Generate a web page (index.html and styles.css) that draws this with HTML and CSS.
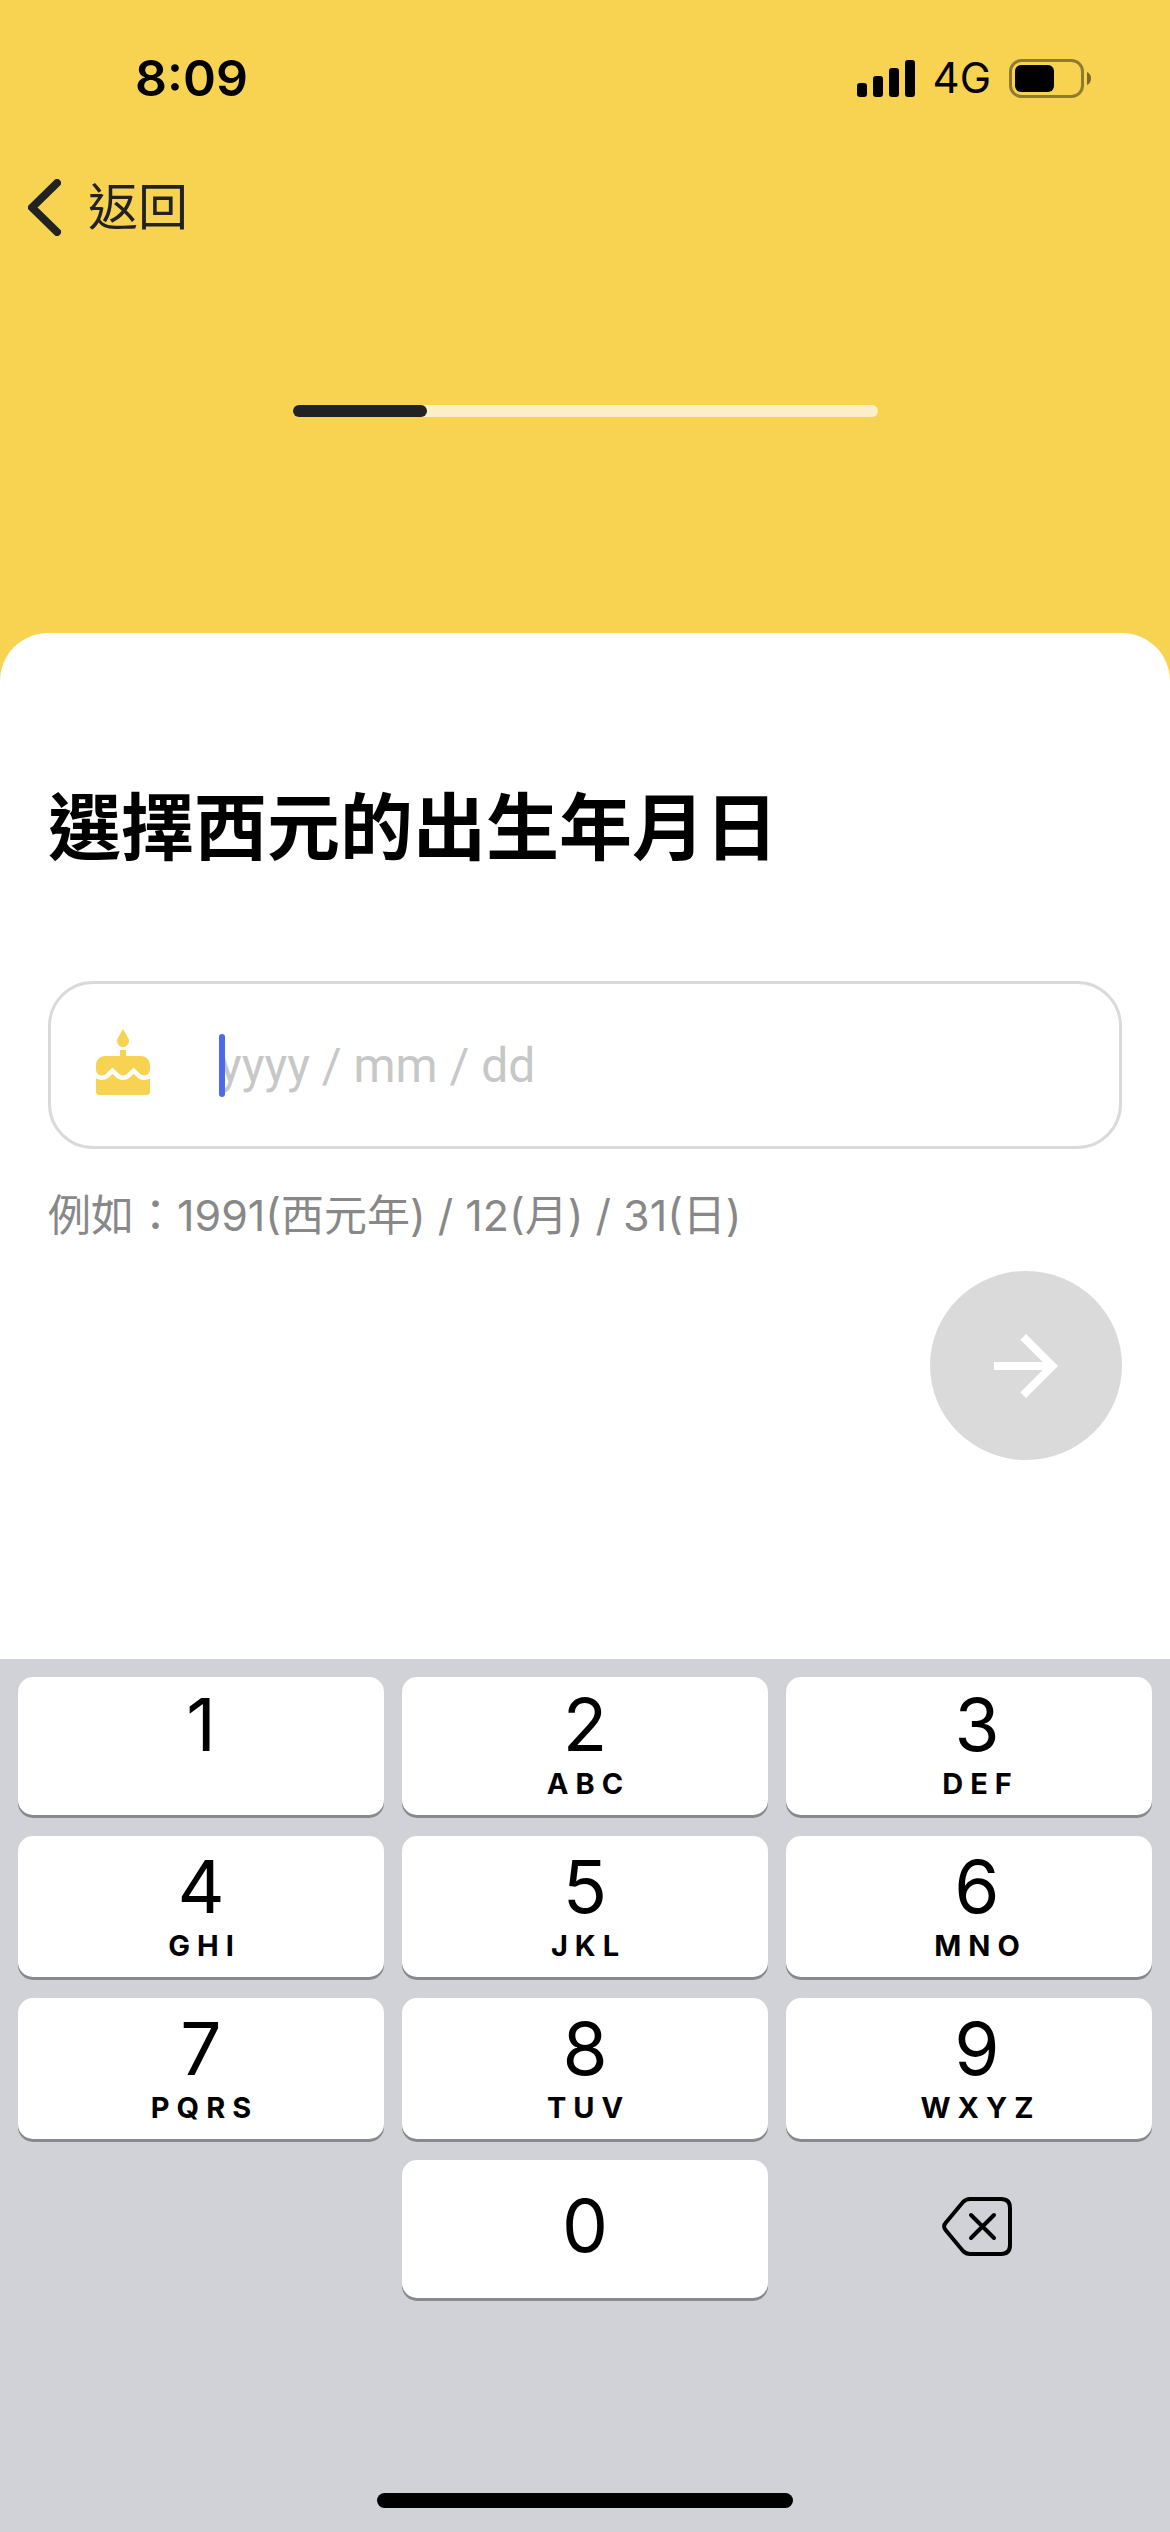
FILE: index.html
```html
<!DOCTYPE html>
<html lang="zh-Hant">
<head>
<meta charset="utf-8">
<meta name="viewport" content="width=device-width, initial-scale=1">
<title>選擇西元的出生年月日</title>
<link rel="stylesheet" href="styles.css">
</head>
<body>
<header class="top">
  <div class="status">
    <span class="status-time">8:09</span>
    <div class="status-icons">
      <svg class="signal" viewBox="0 0 58 37" aria-hidden="true">
        <rect x="0" y="23" width="10" height="14" rx="3"/>
        <rect x="16" y="16" width="10" height="21" rx="3"/>
        <rect x="32" y="8" width="10" height="29" rx="3"/>
        <rect x="48" y="0" width="10" height="37" rx="3"/>
      </svg>
      <span class="status-network">4G</span>
      <svg class="battery" viewBox="0 0 82 39" aria-hidden="true">
        <rect x="1.5" y="1.5" width="72" height="36" rx="11" fill="none" stroke="#000" stroke-width="3" opacity=".42"/>
        <path d="M78 13c2.600 1 4 3.500 4 6.500s-1.400 5.500-4 6.500z" opacity=".5"/>
        <rect x="6" y="6" width="39" height="27" rx="6"/>
      </svg>
    </div>
  </div>
  <nav class="nav">
    <a class="back" href="#">
      <svg class="back-icon" viewBox="0 0 33 57" aria-hidden="true"><path d="M29 4 4 28.500 29 53"/></svg>
      <span>返回</span>
    </a>
  </nav>
  <div class="progress" role="progressbar" aria-valuemin="0" aria-valuemax="100" aria-valuenow="23" aria-label="進度">
    <div class="progress-fill" style="width: 23%"></div>
  </div>
</header>

<main class="sheet">
  <h1 class="title"><label for="birthday">選擇西元的出生年月日</label></h1>
  <div class="field">
    <svg class="cake" viewBox="0 0 24 24" aria-hidden="true"><path d="M12 6c1.110 0 2-.9 2-2 0-.38-.1-.73-.29-1.030L12 0l-1.710 2.970c-.19.3-.29.65-.29 1.030 0 1.100.9 2 2 2zm4.600 9.990l-1.070-1.070-1.080 1.070c-1.300 1.300-3.580 1.310-4.890 0l-1.070-1.070-1.090 1.070C6.750 16.640 5.880 17 4.960 17c-.73 0-1.400-.23-1.960-.61V21c0 .55.45 1 1 1h16c.55 0 1-.45 1-1v-4.610c-.56.38-1.230.61-1.960.61-.92 0-1.790-.36-2.440-1.010zM18 9h-5V7h-2v2H6c-1.660 0-3 1.340-3 3v1.540c0 1.080.88 1.960 1.960 1.960.52 0 1.020-.2 1.380-.57l2.140-2.130 2.130 2.130c.74.74 2.030.74 2.770 0l2.140-2.130 2.130 2.130c.37.37.86.57 1.380.57 1.080 0 1.960-.88 1.960-1.960V12C21 10.340 19.660 9 18 9z"/></svg>
    <div class="entry">
      <input class="date" id="birthday" type="text" inputmode="numeric" placeholder="yyyy / mm / dd" aria-describedby="hint">
      <span class="caret" aria-hidden="true"></span>
    </div>
  </div>
  <p class="hint" id="hint">例如：1991(西元年) / 12(月) / 31(日)</p>
  <button class="next" type="button" aria-label="下一步">
    <svg class="next-icon" viewBox="0 0 16 16" aria-hidden="true"><path d="M8 0 6.590 1.410 12.170 7H0v2h12.170l-5.580 5.590L8 16l8-8z"/></svg>
  </button>
</main>

<section class="keyboard" aria-label="數字鍵盤">
  <div class="keys">
    <button class="key" type="button"><span class="digit">1</span><span class="letters"></span></button>
    <button class="key" type="button"><span class="digit">2</span><span class="letters">ABC</span></button>
    <button class="key key-right" type="button"><span class="digit">3</span><span class="letters">DEF</span></button>
    <button class="key" type="button"><span class="digit">4</span><span class="letters">GHI</span></button>
    <button class="key" type="button"><span class="digit">5</span><span class="letters">JKL</span></button>
    <button class="key key-right" type="button"><span class="digit">6</span><span class="letters">MNO</span></button>
    <button class="key" type="button"><span class="digit">7</span><span class="letters">PQRS</span></button>
    <button class="key" type="button"><span class="digit">8</span><span class="letters">TUV</span></button>
    <button class="key key-right" type="button"><span class="digit">9</span><span class="letters">WXYZ</span></button>
    <button class="key key-zero" type="button"><span class="digit">0</span></button>
    <button class="key key-right key-delete" type="button" aria-label="刪除">
      <svg class="delete-icon" viewBox="0 0 70 59" aria-hidden="true"><path d="M28 2h31c6 0 9 3 9 9v37c0 6-3 9-9 9H28c-3 0-5-1-7-3L4 33.500c-2.500-2.500-2.500-5.500 0-8L21 5c2-2 4-3 7-3z"/><path d="M29 18l23 23M52 18 29 41"/></svg>
    </button>
  </div>
  <div class="home-bar"></div>
</section>
</body>
</html>
```

FILE: styles.css
```css
*,
*::before,
*::after {
  box-sizing: border-box;
}

body {
  margin: 0;
  min-height: 100vh;
  display: flex;
  flex-direction: column;
  background: #f8d351;
  color: #000;
  font-family: Inter, "Noto Sans CJK TC", sans-serif;
}

button,
input {
  border: 0;
  padding: 0;
  font: inherit;
  color: inherit;
}

/* Status bar, back link and progress */
.top {
  padding-bottom: 216px;
}

.status {
  display: flex;
  align-items: center;
  justify-content: space-between;
  height: 156px;
  padding: 0 79px 0 135px;
}

.status-time {
  font-size: 50px;
  font-weight: 600;
  line-height: 60px;
}

.status-icons {
  display: flex;
  align-items: center;
  gap: 18px;
}

.status-network {
  font-size: 42px;
  line-height: 48px;
}

.signal {
  width: 58px;
  height: 37px;
}

.battery {
  width: 82px;
  height: 39px;
}

.nav {
  display: flex;
  height: 102px;
  padding-left: 28px;
}

.back {
  display: flex;
  align-items: center;
  gap: 27px;
  color: #222;
  font-size: 50px;
  line-height: 60px;
  text-decoration: none;
}

.back-icon {
  width: 33px;
  height: 57px;
  fill: none;
  stroke: #222;
  stroke-width: 8;
  stroke-linecap: round;
  stroke-linejoin: round;
}

.progress {
  width: 50%;
  height: 12px;
  margin: 147px auto 0;
  border-radius: 6px;
  background: #faefc6;
}

.progress-fill {
  height: 100%;
  border-radius: 6px;
  background: #222;
}

/* White sheet with the form */
.sheet {
  flex: 1;
  display: flex;
  flex-direction: column;
  padding: 150px 48px 48px;
  border-radius: 48px 48px 0 0;
  background: #fff;
}

.title {
  margin: 0;
  font-size: 73px;
  font-weight: 700;
  line-height: 90px;
}

.field {
  display: flex;
  align-items: center;
  gap: 60px;
  height: 168px;
  margin-top: 108px;
  padding: 0 36px;
  border: 3px solid #dadada;
  border-radius: 45px;
}

.cake {
  flex: none;
  width: 72px;
  height: 72px;
  fill: #f8d351;
}

.entry {
  position: relative;
  flex: 1;
}

.date {
  display: block;
  width: 100%;
  height: 63px;
  outline: 0;
  background: none;
  font-family: Roboto, "Noto Sans CJK TC", sans-serif;
  font-size: 48px;
}

.date::placeholder {
  color: #c7c7c7;
  opacity: 1;
}

.caret {
  position: absolute;
  top: 0;
  left: 0;
  width: 6px;
  height: 63px;
  border-radius: 3px;
  background: #4c6ae9;
}

.hint {
  margin: 36px 0 0;
  color: #888;
  font-size: 43px;
  line-height: 60px;
}

.next {
  display: grid;
  place-items: center;
  align-self: flex-end;
  width: 192px;
  height: 189px;
  margin-top: 26px;
  border-radius: 50%;
  background: #dadada;
}

.next-icon {
  width: 64px;
  height: 64px;
  fill: #fff;
}

/* Number pad */
.keyboard {
  padding: 18px 18px 24px;
  background: #d1d2d8;
}

.keys {
  display: grid;
  grid-template-columns: repeat(3, 1fr);
  grid-template-rows: 138px 141px 141px 138px;
  gap: 21px 18px;
}

.key {
  display: flex;
  flex-direction: column;
  align-items: center;
  justify-content: flex-end;
  padding-bottom: 15px;
  border-radius: 15px;
  background: #fff;
  box-shadow: 0 3px 0 #88898d;
}

.key-right {
  padding-left: 16px;
}

.digit {
  font-size: 73px;
  line-height: 84px;
}

.letters {
  height: 33px;
  padding-left: 7px;
  font-size: 29px;
  font-weight: 700;
  line-height: 33px;
  letter-spacing: 7px;
}

.key-zero {
  grid-column: 2;
  justify-content: center;
  padding-bottom: 6px;
}

.key-delete {
  justify-content: center;
  padding-bottom: 6px;
  background: none;
  box-shadow: none;
}

.delete-icon {
  width: 70px;
  height: 59px;
  fill: none;
  stroke: #000;
  stroke-width: 4;
  stroke-linecap: round;
}

.home-bar {
  width: 416px;
  height: 15px;
  margin: 195px auto 0;
  border-radius: 8px;
  background: #000;
}
```
